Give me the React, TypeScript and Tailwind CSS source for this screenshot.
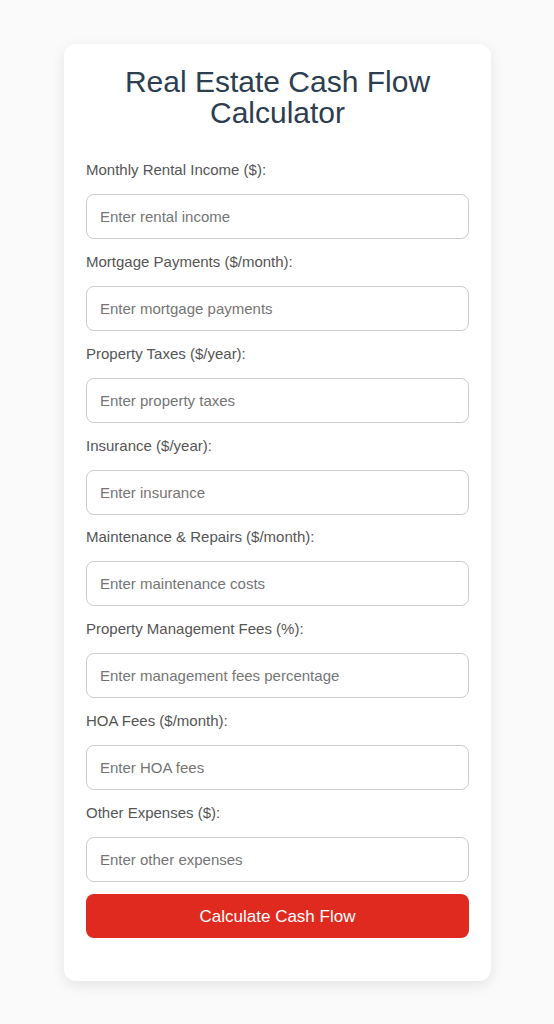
import React from "react";

const fields = [
  { label: "Monthly Rental Income ($):", placeholder: "Enter rental income" },
  { label: "Mortgage Payments ($/month):", placeholder: "Enter mortgage payments" },
  { label: "Property Taxes ($/year):", placeholder: "Enter property taxes" },
  { label: "Insurance ($/year):", placeholder: "Enter insurance" },
  { label: "Maintenance & Repairs ($/month):", placeholder: "Enter maintenance costs" },
  { label: "Property Management Fees (%):", placeholder: "Enter management fees percentage" },
  { label: "HOA Fees ($/month):", placeholder: "Enter HOA fees" },
  { label: "Other Expenses ($):", placeholder: "Enter other expenses" },
];

export default function App() {
  return (
    <div
      className="min-h-screen bg-[#fafafa] pt-[44px] pb-10"
      style={{ fontFamily: '"Liberation Sans", Arial, sans-serif' }}
    >
      <div className="ml-[64px] w-[427px] rounded-[12px] bg-white px-[22px] pt-[22px] pb-[43px] shadow-[0_4px_14px_rgba(0,0,0,0.09)]">
        <h1 className="mb-[33px] text-center text-[30px] leading-[31px] font-normal text-[#2c3e50]">
          Real Estate Cash Flow Calculator
        </h1>
        <form onSubmit={(e) => e.preventDefault()}>
          {fields.map((f) => (
            <div key={f.label}>
              <label className="mb-[15px] block text-[15px] leading-[18px] text-[#555]">
                {f.label}
              </label>
              <input
                type="number"
                placeholder={f.placeholder}
                className="mb-[13.85px] block h-[45px] w-full rounded-[8px] border border-[#ccc] px-[13px] text-[15px] text-[#333] placeholder:text-[#757575] outline-none"
              />
            </div>
          ))}
          <button
            type="submit"
            className="-mt-[1.5px] block h-[44px] w-full rounded-[8px] bg-[#e0291f] text-[17px] text-white"
          >
            Calculate Cash Flow
          </button>
        </form>
      </div>
    </div>
  );
}
